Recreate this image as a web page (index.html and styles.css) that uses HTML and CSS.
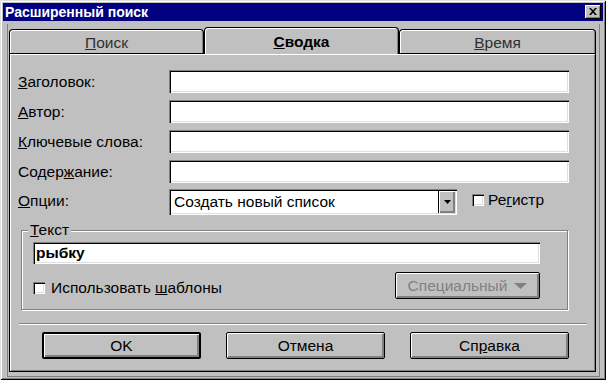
FILE: index.html
```html
<!DOCTYPE html>
<html lang="ru">
<head>
<meta charset="utf-8">
<title>Расширенный поиск</title>
<link rel="stylesheet" href="styles.css">
</head>
<body>
<div class="window">
  <div class="titlebar">
    <span class="title">Расширенный поиск</span>
    <span class="close"><svg width="8" height="7" viewBox="0 0 8 7"><path d="M0 0h2l2 2.3L6 0h2L5 3.5 8 7H6L4 4.7 2 7H0l3-3.5z" fill="#000"/></svg></span>
  </div>
  <div class="frame">
    <div class="tabs">
      <div class="tab"><span><u>П</u>оиск</span></div>
      <div class="tab active"><span><u>С</u>водка</span></div>
      <div class="tab wide"><span><u>В</u>ремя</span></div>
    </div>
    <div class="panel">
      <div class="row"><span class="lbl"><u>З</u>аголовок:</span><div class="field"></div></div>
      <div class="row"><span class="lbl"><u>А</u>втор:</span><div class="field"></div></div>
      <div class="row"><span class="lbl"><u>К</u>лючевые слова:</span><div class="field"></div></div>
      <div class="row"><span class="lbl">Содер<u>ж</u>ание:</span><div class="field"></div></div>
      <div class="row combo-row">
        <span class="lbl"><u>О</u>пции:</span>
        <div class="combo">
          <span class="combo-text">Создать новый список</span>
          <span class="combo-btn"><svg width="7" height="4" viewBox="0 0 7 4"><path d="M0 0h7L3.5 4z" fill="#000"/></svg></span>
        </div>
        <span class="check-item reg"><span class="checkbox"></span><span>Ре<u>г</u>истр</span></span>
      </div>
      <div class="group">
        <span class="legend"><u>Т</u>екст</span>
        <div class="field text-field">рыбку</div>
        <div class="group-row">
          <span class="check-item tpl"><span class="checkbox"></span><span>Использовать <u>ш</u>аблоны</span></span>
          <span class="btn disabled">Специальный <svg width="13" height="6" viewBox="0 0 13 6"><path d="M0 0h13L6.5 6z" fill="#808080"/></svg></span>
        </div>
      </div>
      <div class="sep"></div>
      <div class="buttons">
        <span class="btn wide-btn default">OK</span>
        <span class="btn wide-btn">Отмена</span>
        <span class="btn wide-btn">Сп<u>р</u>авка</span>
      </div>
    </div>
  </div>
</div>
</body>
</html>
```

FILE: styles.css
```css
html, body {
  margin: 0;
  padding: 0;
  background: #c0c0c0;
}

.window {
  width: 606px;
  height: 380px;
  box-sizing: border-box;
  padding: 3px;
  background: #c0c0c0;
  display: flex;
  flex-direction: column;
  box-shadow: inset 1px 1px #dfdfdf, inset -1px -1px #000, inset 2px 2px #fff, inset -2px -2px #808080;
  font-family: "Liberation Sans", Arial, sans-serif;
  font-size: 15.5px;
  color: #000;
}

.titlebar {
  flex: none;
  height: 18px;
  background: #000080;
  display: flex;
  align-items: center;
  justify-content: space-between;
  padding: 0 2px 0 2px;
}

.title {
  color: #fff;
  font-weight: bold;
  font-size: 14px;
}

.close {
  width: 16px;
  height: 14px;
  box-sizing: border-box;
  background: #c0c0c0;
  box-shadow: inset -1px -1px #000, inset 1px 1px #fff, inset -2px -2px #808080;
  display: flex;
  align-items: center;
  justify-content: center;
  padding-bottom: 1px;
}

.frame {
  flex: 1;
  margin: 3px 3px 0 4px;
  border: 1px solid #808080;
  border-top: none;
  padding: 3px 3px 4px 1px;
  display: flex;
  flex-direction: column;
}

.tabs {
  flex: none;
  display: flex;
  align-items: flex-end;
  height: 27px;
  margin-bottom: -1px;
  position: relative;
  z-index: 1;
}

.tab {
  box-sizing: border-box;
  width: 195px;
  height: 24px;
  margin-bottom: 1px;
  border: 1px solid #000;
  border-bottom: none;
  border-radius: 4px 4px 0 0;
  background: #c0c0c0;
  box-shadow: inset 1px 1px #fff, inset -1px 0 #808080;
  display: flex;
  align-items: center;
  justify-content: center;
  padding-top: 2px;
  color: #303030;
}

.tab.wide {
  width: 197px;
}

.tab.active {
  height: 27px;
  margin-bottom: 0;
  padding-top: 2px;
  font-weight: bold;
  color: #000;
}

.panel {
  flex: 1;
  border: 1px solid #000;
  box-shadow: inset 1px 1px #fff, inset -1px -1px #808080;
  padding: 16px 10px 0 8px;
  display: flex;
  flex-direction: column;
}

.row {
  flex: none;
  display: flex;
  align-items: center;
  height: 23px;
  margin-bottom: 7px;
}

.lbl {
  flex: none;
  width: 151px;
}

.field {
  box-sizing: border-box;
  width: 400px;
  height: 23px;
  background: #fff;
  box-shadow: inset 1px 1px #808080, inset 2px 2px #000, inset -1px -1px #fff, inset -2px -2px #dfdfdf;
}

.combo-row {
  height: 26px;
  margin-top: -1px;
  margin-bottom: 0;
  align-items: stretch;
}

.combo-row .lbl {
  align-self: center;
  padding-bottom: 3px;
}

.combo {
  box-sizing: border-box;
  width: 288px;
  height: 26px;
  padding: 2px;
  display: flex;
  background: #fff;
  box-shadow: inset 1px 1px #808080, inset 2px 2px #000, inset -1px -1px #fff, inset -2px -2px #dfdfdf;
}

.combo-text {
  flex: 1;
  padding-left: 3px;
  line-height: 22px;
}

.combo-btn {
  width: 16px;
  border-left: 1px solid #000;
  background: #c0c0c0;
  box-shadow: inset 1px 1px #fff, inset -1px -1px #808080, inset -2px -2px #808080;
  display: flex;
  align-items: center;
  justify-content: center;
}

.check-item {
  display: flex;
  align-items: center;
  gap: 4px;
  line-height: 17px;
}

.reg {
  margin-left: 15px;
  align-self: flex-start;
  margin-top: 2px;
}

.checkbox {
  flex: none;
  width: 12px;
  height: 12px;
  background: #fff;
  box-shadow: inset 1px 1px #808080, inset 2px 2px #000, inset -1px -1px #fff, inset -2px -2px #dfdfdf;
}

.group {
  flex: none;
  position: relative;
  box-sizing: border-box;
  width: 547px;
  height: 80px;
  margin: 15px 0 0 3px;
  border: 1px solid #808080;
  box-shadow: inset 1px 1px #fff, 1px 1px #fff;
  padding: 11px 0 0 11px;
}

.legend {
  position: absolute;
  left: 6px;
  top: -10px;
  padding: 0 2px;
  line-height: 18px;
  background: #c0c0c0;
}

.text-field {
  width: 507px;
  height: 22px;
  padding-left: 3px;
  line-height: 22px;
  font-weight: bold;
}

.group-row {
  display: flex;
  justify-content: space-between;
  align-items: center;
  width: 507px;
  height: 27px;
  margin-top: 8px;
}

.tpl {
  gap: 6px;
  margin-top: 4px;
}

.btn {
  box-sizing: border-box;
  height: 27px;
  border: 1px solid #000;
  border-radius: 2px;
  background: #c0c0c0;
  box-shadow: inset 1px 1px #fff, inset -1px -1px #808080, inset -2px -2px #808080;
  display: flex;
  align-items: center;
  justify-content: center;
}

.btn.disabled {
  width: 145px;
  color: #808080;
  gap: 7px;
}

.sep {
  flex: none;
  margin: 13px -2px 0 1px;
  border-top: 1px solid #808080;
  border-bottom: 1px solid #fff;
}

.buttons {
  flex: none;
  display: flex;
  gap: 25px;
  margin: 7px 0 0 24px;
}

.wide-btn {
  width: 159px;
}

.btn.default {
  border-width: 2px;
}
```
